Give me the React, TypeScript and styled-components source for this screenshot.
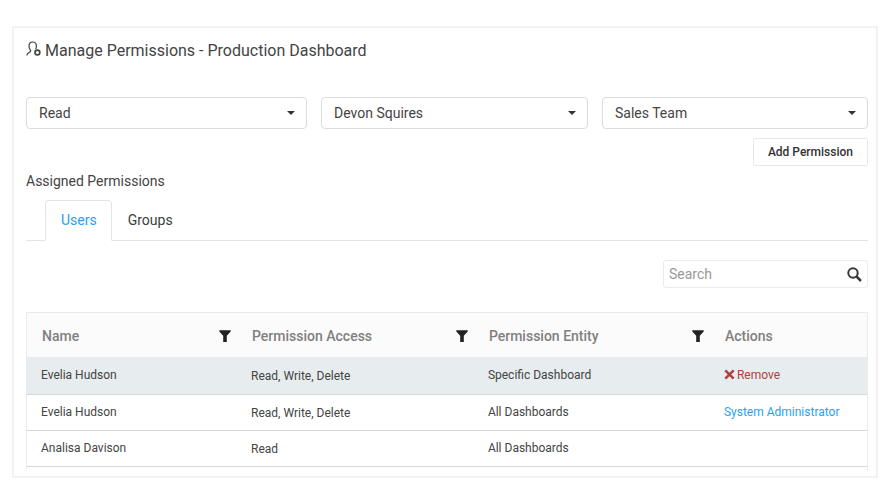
import React, { useState } from "react";
import styled, { createGlobalStyle } from "styled-components";

const GlobalStyle = createGlobalStyle`
  *, *::before, *::after { box-sizing: border-box; }
  body {
    margin: 0;
    background: #fff;
    color: #444;
    font-family: Roboto, "Liberation Sans", sans-serif;
    font-size: 14px;
  }
  button, input, select { font: inherit; color: inherit; }
`;

const Panel = styled.main`
  margin: 26px 6px 20px 12px;
  padding: 11px 8px 6px 12px;
  border: 2px solid #f2f2f2;
`;

const Title = styled.h1`
  display: flex;
  align-items: center;
  gap: 4px;
  margin: 0 0 34px;
  font-size: 16px;
  font-weight: 400;
  line-height: 24px;
`;

const UserGear = styled.svg`
  width: 15px;
  height: 16px;
  margin-bottom: 4px;
`;

const Filters = styled.div`
  display: grid;
  grid-template-columns: 281fr 267fr 266fr;
  gap: 14px;
`;

const SelectBox = styled.div`
  position: relative;
`;

const Select = styled.select`
  display: block;
  width: 100%;
  height: 32px;
  padding: 0 30px 0 12px;
  border: 1px solid #dcdcdc;
  border-radius: 4px;
  background: #fff;
  appearance: none;
`;

const Caret = styled.svg`
  position: absolute;
  right: 12px;
  top: 14px;
  width: 8px;
  height: 4px;
  pointer-events: none;
`;

const ButtonRow = styled.div`
  display: flex;
  justify-content: flex-end;
  margin-top: 9px;
`;

const AddButton = styled.button`
  height: 28px;
  padding: 0 14px;
  border: 1px solid #e6e9eb;
  border-radius: 2px;
  background: #fff;
  color: #333;
  font-size: 12px;
  font-weight: 500;
`;

const SectionTitle = styled.h2`
  margin: 5px 0 9px;
  font-size: 14px;
  font-weight: 400;
  line-height: 20px;
`;

const TabBar = styled.div`
  display: flex;
  padding-left: 19px;
  border-bottom: 1px solid #e4e4e4;
`;

const Tab = styled.button<{ $active: boolean }>`
  height: 41px;
  margin-bottom: -1px;
  padding: 0 14px 1px 15px;
  border: 1px solid ${(p) => (p.$active ? "#e4e4e4" : "transparent")};
  border-bottom-color: ${(p) => (p.$active ? "#fff" : "transparent")};
  border-radius: 4px 4px 0 0;
  background: ${(p) => (p.$active ? "#fff" : "transparent")};
  color: ${(p) => (p.$active ? "#2b9ff3" : "#3c3c3c")};
`;

const SearchBox = styled.label`
  display: flex;
  align-items: center;
  width: 205px;
  height: 28px;
  margin: 19px 0 24px auto;
  padding: 0 5px;
  border: 1px solid #ebebeb;
  border-radius: 3px;
`;

const SearchInput = styled.input`
  flex: 1;
  min-width: 0;
  padding: 0;
  border: 0;
  outline: 0;
  background: transparent;
  &::placeholder { color: #999; opacity: 1; }
`;

const SearchIcon = styled.svg`
  width: 15px;
  height: 15px;
`;

const TableFrame = styled.div`
  padding-bottom: 3px;
  border: 1px solid #ebebeb;
  border-bottom: 0;
`;

const Table = styled.table`
  width: 100%;
  border-collapse: collapse;
  table-layout: fixed;
`;

const Col = styled.col<{ $share: number }>`
  width: ${(p) => p.$share}%;
`;

const HeadCell = styled.th`
  height: 44px;
  padding: 2px 6px 0 15px;
  background: #fbfbfb;
  color: #808080;
  font-weight: 500;
  text-align: left;
`;

const HeadContent = styled.div`
  display: flex;
  align-items: center;
  justify-content: space-between;
`;

const FilterButton = styled.button`
  display: flex;
  padding: 0;
  border: 0;
  background: transparent;
`;

const FilterIcon = styled.svg`
  width: 12px;
  height: 12px;
`;

const Row = styled.tr<{ $selected: boolean }>`
  height: ${(p) => (p.$selected ? 37 : 36)}px;
  border-bottom: 1px solid #d8d8d8;
  background: ${(p) => (p.$selected ? "#e7ecee" : "#fff")};
`;

const Cell = styled.td<{ $low?: boolean }>`
  padding: ${(p) => (p.$low ? "2px 0 0 14px" : "0 0 1px 14px")};
  font-size: 12px;
  line-height: 16px;
  white-space: nowrap;
`;

const RemoveButton = styled.button`
  display: flex;
  align-items: center;
  gap: 2px;
  padding: 0;
  border: 0;
  background: transparent;
  color: #b04040;
`;

const CrossIcon = styled.svg`
  width: 11px;
  height: 11px;
`;

const RoleLink = styled.a`
  color: #2b9ff3;
  text-decoration: none;
`;

const selects = [
  { label: "Access", options: ["Read", "Write", "Delete"] },
  { label: "User", options: ["Devon Squires", "Evelia Hudson", "Analisa Davison"] },
  { label: "Group", options: ["Sales Team"] },
];

const columns = [
  { name: "Name", share: 25, filter: true },
  { name: "Permission Access", share: 28.2, filter: true },
  { name: "Permission Entity", share: 28.1, filter: true },
  { name: "Actions", share: 18.7, filter: false },
];

const rows = [
  { name: "Evelia Hudson", access: "Read, Write, Delete", entity: "Specific Dashboard", action: "remove" },
  { name: "Evelia Hudson", access: "Read, Write, Delete", entity: "All Dashboards", action: "admin" },
  { name: "Analisa Davison", access: "Read", entity: "All Dashboards", action: "" },
];

export default function App() {
  const [tab, setTab] = useState("Users");

  return (
    <>
      <GlobalStyle />
      <Panel>
        <Title>
          <UserGear viewBox="0 0 15 16" fill="none" stroke="#444" aria-hidden="true">
            <path d="M.8 14.500c.1-2 .8-2.400 2.800-3.400 1.400-.7 1.300-1.300.5-2.400C3.400 7.700 3 6.500 3 5c0-2.600 1.500-4 3.700-4s3.700 1.400 3.700 4c0 1.400-.2 2.200-.7 3.200" strokeWidth="1.200" />
            <circle cx="11.400" cy="11.500" r="2.400" strokeWidth="1.700" />
          </UserGear>
          Manage Permissions - Production Dashboard
        </Title>

        <Filters>
          {selects.map((s) => (
            <SelectBox key={s.label}>
              <Select aria-label={s.label}>
                {s.options.map((o) => (
                  <option key={o}>{o}</option>
                ))}
              </Select>
              <Caret viewBox="0 0 8 4" aria-hidden="true">
                <path d="M0 0h8L4 4z" fill="#333" />
              </Caret>
            </SelectBox>
          ))}
        </Filters>

        <ButtonRow>
          <AddButton type="button">Add Permission</AddButton>
        </ButtonRow>

        <SectionTitle>Assigned Permissions</SectionTitle>

        <TabBar role="tablist">
          {["Users", "Groups"].map((t) => (
            <Tab key={t} type="button" role="tab" aria-selected={tab === t} $active={tab === t} onClick={() => setTab(t)}>
              {t}
            </Tab>
          ))}
        </TabBar>

        <SearchBox>
          <SearchInput type="text" placeholder="Search" aria-label="Search" />
          <SearchIcon viewBox="0 0 15 15" fill="none" stroke="#3a3a3a" aria-hidden="true">
            <circle cx="6" cy="6" r="4.700" strokeWidth="2" />
            <path d="M9.500 9.500l4.500 4.500" strokeWidth="2.500" />
          </SearchIcon>
        </SearchBox>

        <TableFrame>
          <Table>
            <colgroup>
              {columns.map((c) => (
                <Col key={c.name} $share={c.share} />
              ))}
            </colgroup>
            <thead>
              <tr>
                {columns.map((c) => (
                  <HeadCell key={c.name} scope="col">
                    <HeadContent>
                      {c.name}
                      {c.filter && (
                        <FilterButton type="button" aria-label={`Filter ${c.name}`}>
                          <FilterIcon viewBox="0 0 12 12" aria-hidden="true">
                            <path d="M.3.300h11.400v1.200L7.800 5.800V12H4.200V5.800L.3 1.500z" fill="#222" />
                          </FilterIcon>
                        </FilterButton>
                      )}
                    </HeadContent>
                  </HeadCell>
                ))}
              </tr>
            </thead>
            <tbody>
              {rows.map((r, i) => (
                <Row key={i} $selected={i === 0}>
                  <Cell>{r.name}</Cell>
                  <Cell $low>{r.access}</Cell>
                  <Cell>{r.entity}</Cell>
                  <Cell>
                    {r.action === "remove" && (
                      <RemoveButton type="button">
                        <CrossIcon viewBox="0 0 11 11" aria-hidden="true">
                          <path d="M1.300 1.300l8.400 8.400M9.700 1.300L1.300 9.700" stroke="currentColor" strokeWidth="2.500" />
                        </CrossIcon>
                        Remove
                      </RemoveButton>
                    )}
                    {r.action === "admin" && <RoleLink href="#system-administrator">System Administrator</RoleLink>}
                  </Cell>
                </Row>
              ))}
            </tbody>
          </Table>
        </TableFrame>
      </Panel>
    </>
  );
}
